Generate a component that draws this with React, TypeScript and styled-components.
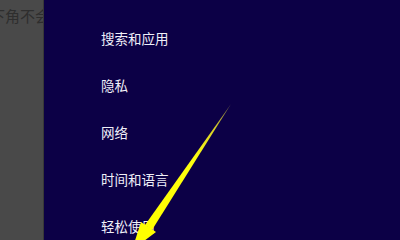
import React from 'react';
import styled, { createGlobalStyle } from 'styled-components';

const Global = createGlobalStyle`
  html, body { margin: 0; padding: 0; }
  body {
    width: 400px;
    height: 240px;
    overflow: hidden;
    font-family: "Noto Sans CJK SC", "Noto Sans", sans-serif;
  }
`;

const Screen = styled.div`
  position: relative;
  display: flex;
  width: 400px;
  height: 240px;
  overflow: hidden;
`;

const Backdrop = styled.div`
  width: 43px;
  flex-shrink: 0;
  background: #494949;
  border-right: 1px solid #383838;
  overflow: hidden;
`;

const BackdropText = styled.div`
  margin: 7px 0 0 -25px;
  white-space: nowrap;
  font-size: 15px;
  line-height: 18px;
  color: #2e2e2e;
`;

const Charms = styled.nav`
  flex: 1;
  background: #0c0046;
  padding: 29px 0 0 57px;
`;

const Menu = styled.ul`
  list-style: none;
  margin: 0;
  padding: 0;
  display: flex;
  flex-direction: column;
  gap: 29px;
`;

const Item = styled.li`
  font-size: 13.5px;
  line-height: 18px;
  color: #f0eff8;
  white-space: nowrap;
`;

const Pointer = styled.svg`
  position: absolute;
  left: 0;
  top: 0;
  width: 400px;
  height: 240px;
  pointer-events: none;
`;

const items = ['搜索和应用', '隐私', '网络', '时间和语言', '轻松使用'];

export default function App() {
  return (
    <>
      <Global />
      <Screen>
        <Backdrop>
          <BackdropText>右下角不会</BackdropText>
        </Backdrop>
        <Charms>
          <Menu>
            {items.map((t) => (
              <Item key={t}>{t}</Item>
            ))}
          </Menu>
        </Charms>
        <Pointer viewBox="0 0 400 240">
          <defs>
            <linearGradient id="shaft" x1="231" y1="104" x2="150" y2="226" gradientUnits="userSpaceOnUse">
              <stop offset="0" stopColor="#7a6e48" />
              <stop offset="0.2" stopColor="#d8d028" />
              <stop offset="0.45" stopColor="#ffff10" />
              <stop offset="1" stopColor="#ffff00" />
            </linearGradient>
          </defs>
          <polygon points="231,104 152,230 145,225" fill="url(#shaft)" />
          <polygon points="156,232 141,222 132,250" fill="#ffff00" />
        </Pointer>
      </Screen>
    </>
  );
}
